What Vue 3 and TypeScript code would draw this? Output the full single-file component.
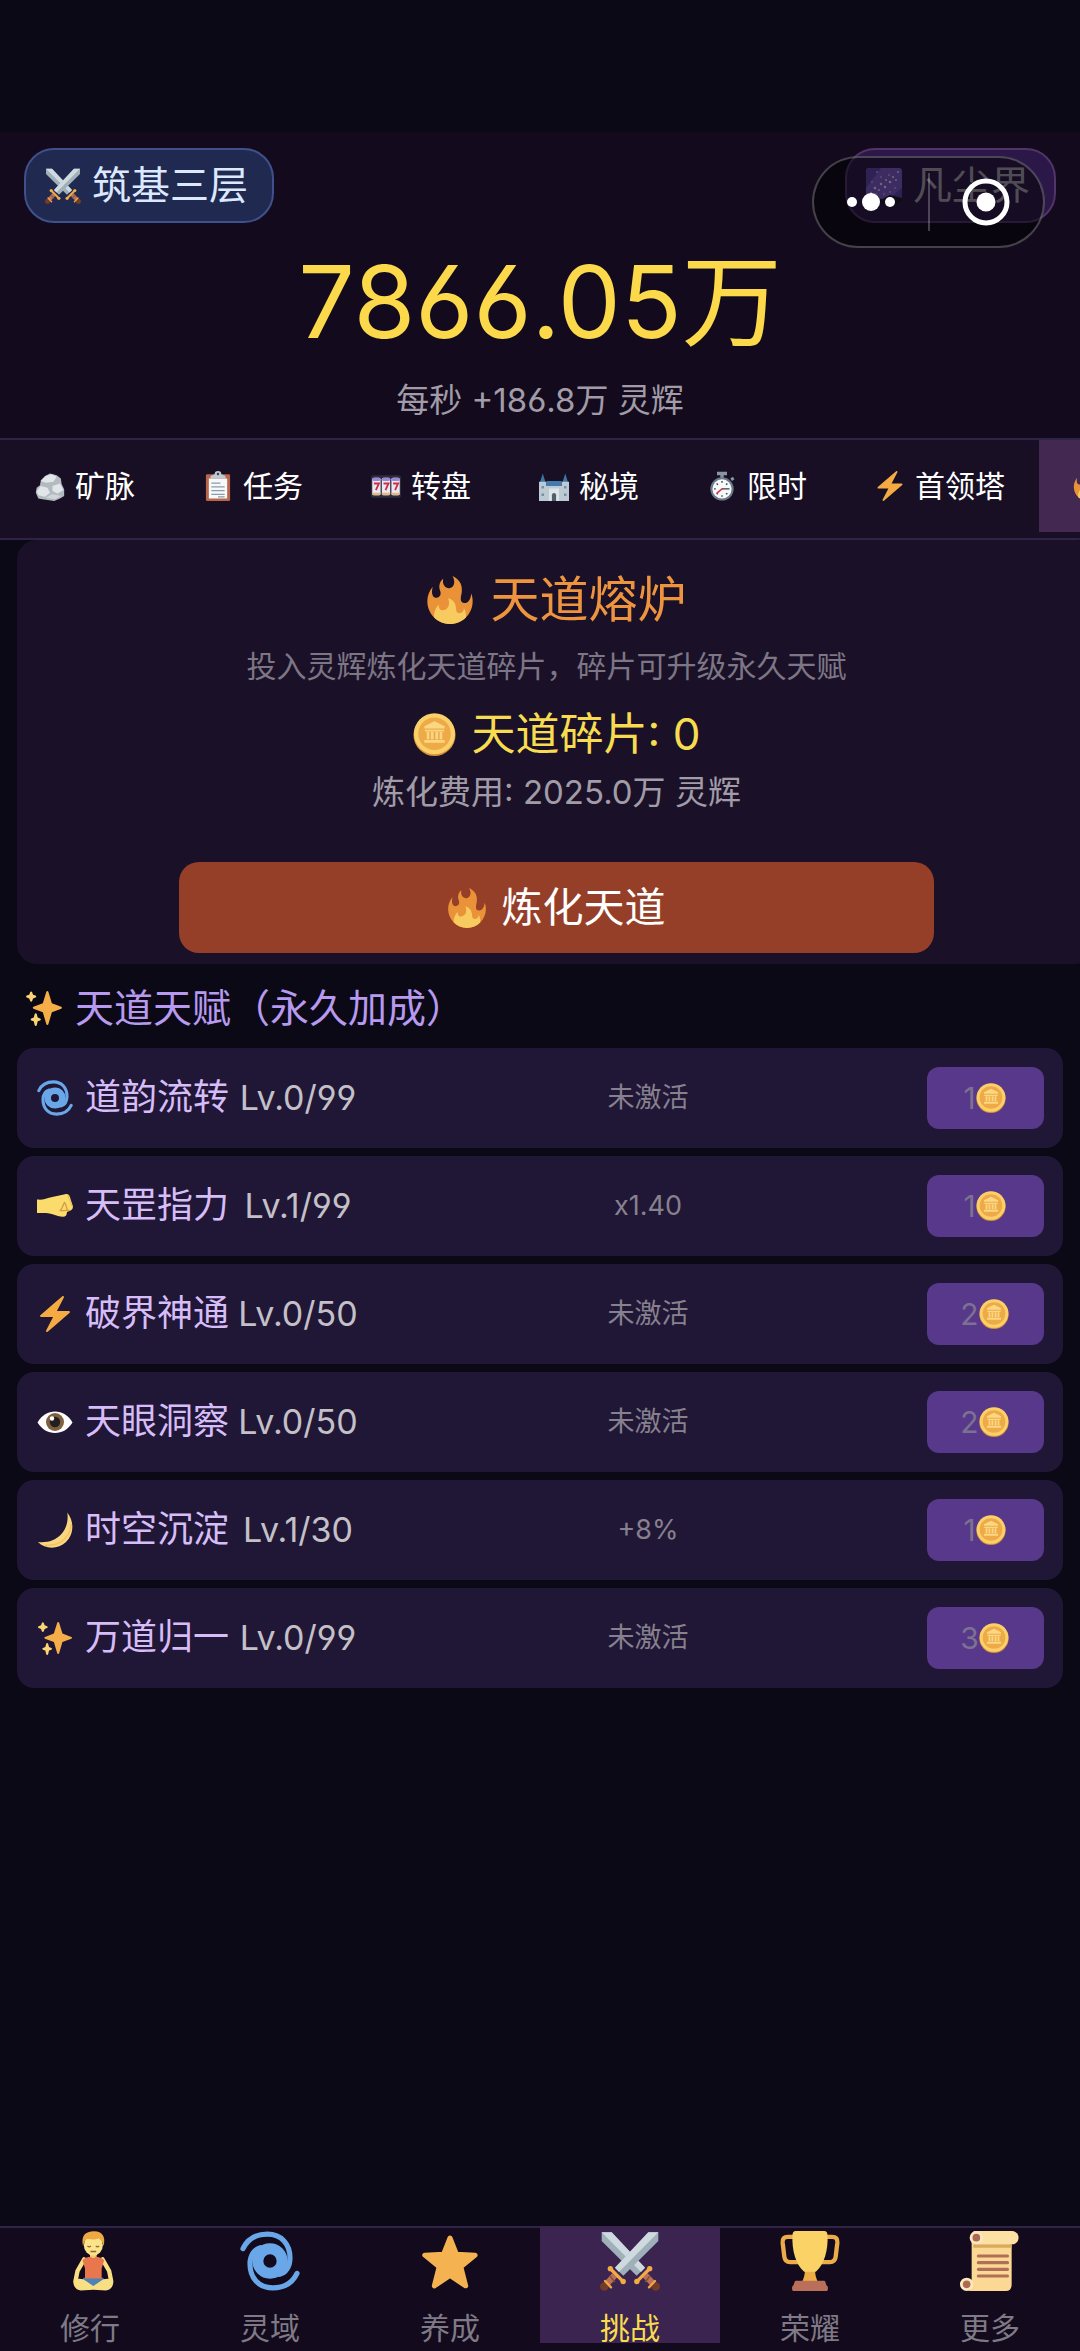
<script setup lang="ts">
interface Tab { icon: string; label: string }
interface Talent { icon: string; name: string; level: string; effect: string; cost: number }

const tabs: Tab[] = [
  { icon: 'rock', label: '矿脉' },
  { icon: 'clipboard', label: '任务' },
  { icon: 'slots', label: '转盘' },
  { icon: 'castle', label: '秘境' },
  { icon: 'watch', label: '限时' },
  { icon: 'bolt', label: '首领塔' },
]

const talents: Talent[] = [
  { icon: 'cyclone', name: '道韵流转', level: 'Lv.0/99', effect: '未激活', cost: 1 },
  { icon: 'fist', name: '天罡指力', level: 'Lv.1/99', effect: 'x1.40', cost: 1 },
  { icon: 'bolt', name: '破界神通', level: 'Lv.0/50', effect: '未激活', cost: 2 },
  { icon: 'eye', name: '天眼洞察', level: 'Lv.0/50', effect: '未激活', cost: 2 },
  { icon: 'moon', name: '时空沉淀', level: 'Lv.1/30', effect: '+8%', cost: 1 },
  { icon: 'sparkles', name: '万道归一', level: 'Lv.0/99', effect: '未激活', cost: 3 },
]

const navItems: Tab[] = [
  { icon: 'lotus', label: '修行' },
  { icon: 'cyclone', label: '灵域' },
  { icon: 'star', label: '养成' },
  { icon: 'swords', label: '挑战' },
  { icon: 'trophy', label: '荣耀' },
  { icon: 'scroll', label: '更多' },
]
const activeNav = '挑战'
</script>

<template>
  <div class="page">
    <svg class="sprite" aria-hidden="true">
      <defs>
        <g id="sword-half">
          <path d="M29 .8h6V6L14 26.8 9 22z" fill="#9fb0b9" />
          <path d="M29 .8h6L11.4 24.6 9 22z" fill="#cfdae0" />
          <path d="M8.8 26.600 4.200 31.600" stroke="#bb7158" stroke-width="3.8" />
          <path d="m6.2 27.200 2.600 3.400" stroke="#8f4d38" stroke-width="1" />
          <circle cx="2.600" cy="33.300" r="2.600" fill="#743a2a" />
          <path d="m3 30 3.600 3.800" stroke="#f0a640" stroke-width="1.4" stroke-linecap="round" />
          <path d="m6.400 22.800 7.400 7.400" stroke="#f3ac45" stroke-width="2" />
          <circle cx="6.200" cy="22.600" r="1.6" fill="#f3ac45" />
          <circle cx="13.900" cy="30.300" r="1.6" fill="#f3ac45" />
        </g>
        <path id="cyclone-arm" d="M1.8 10.6C5 3.8 11 1.9 16.4 1.9 25 1.9 30 8 30 16.2c0 5.2-2.6 8.8-6.2 9.8" fill="none" stroke="#69a7e8" stroke-width="3.1" stroke-linecap="round" />
      </defs>
      <symbol id="i-swords" viewBox="0 0 36 36">
        <use href="#sword-half" transform="matrix(-1 0 0 1 36 0)" />
        <use href="#sword-half" />
      </symbol>
      <symbol id="i-galaxy" viewBox="0 0 36 36">
        <rect width="36" height="36" rx="3" fill="#7a58c4" />
        <path d="M0 8V3a3 3 0 0 1 3-3h12L0 20zM36 20v13a3 3 0 0 1-3 3H16z" fill="#5d44a8" />
        <path d="M0 32l8-3 8 2 8-4 12 3v3a3 3 0 0 1-3 3H3a3 3 0 0 1-3-3z" fill="#20182e" />
        <g fill="#ded2fb">
          <circle cx="5" cy="25" r="1.2" /><circle cx="9" cy="20" r="1.3" /><circle cx="13" cy="22" r="1" />
          <circle cx="15" cy="16" r="1.2" /><circle cx="19" cy="19" r="1.3" /><circle cx="20" cy="12" r="1" />
          <circle cx="24" cy="14" r="1.3" /><circle cx="27" cy="9" r="1.1" /><circle cx="30" cy="12" r=".9" />
          <circle cx="32" cy="4" r="1" /><circle cx="10" cy="26" r=".8" /><circle cx="23" cy="7" r=".8" />
        </g>
        <g fill="#b59af0">
          <circle cx="6" cy="14" r="1" /><circle cx="11" cy="4" r="1" /><circle cx="15" cy="9" r="1" />
          <circle cx="24" cy="24" r="1" /><circle cx="29" cy="20" r="1" /><circle cx="18" cy="26" r="1" />
        </g>
      </symbol>
      <symbol id="i-rock" viewBox="0 0 36 36">
        <path d="M1 26 2 20l4-3 1-6 5-5 6-3 8 2 5 4 1 7 3 6v8l-5 3-7 3-6-1-8-1-5-1z" fill="#b3bbc1" />
        <path d="M7 12l6-6 7-2 6 3-4 6-9 1zM2 24l5-6 8 2 3 6-6 5-8-2zM21 18l9-3 4 8-7 4-6-3z" fill="#e2e6e9" />
        <path d="M13 32l7-4 8 1 3 1-7 4z" fill="#cfd5d9" />
      </symbol>
      <symbol id="i-clipboard" viewBox="0 0 36 36">
        <rect x="3.5" y="4" width="29" height="32" rx="1.5" fill="#b9654c" />
        <path d="M7 9h22v24H7z" fill="#f6f8fa" />
        <path d="M9 9V6l5-2a4 4 0 0 1 8 0l5 2v3z" fill="#bfc9d0" />
        <circle cx="18" cy="3.6" r="1.5" fill="#3b4650" />
        <path d="M10 14.5h11M10 19h16M10 23.500h16M10 28h16M18 31h8" stroke="#8b9cab" stroke-width="1.5" />
      </symbol>
      <symbol id="i-slots" viewBox="0 0 36 36">
        <rect y="5" width="36" height="27" rx="3" fill="#2b2d3c" />
        <g v-for="n in 3" :key="n">
          <rect :x="n * 11.500 - 10" y="8" width="10" height="21" rx="2" fill="#e9e9f4" />
          <rect :x="n * 11.500 - 10" y="8" width="10" height="4" rx="2" fill="#9b86d6" />
          <rect :x="n * 11.500 - 10" y="26" width="10" height="3" rx="1" fill="#e3b988" />
          <path :d="`M${n * 11.5 - 8} 15h6l-3.600 8`" fill="none" stroke="#cf2f45" stroke-width="2.200" />
        </g>
      </symbol>
      <symbol id="i-castle" viewBox="0 0 36 36">
        <path d="M1 14 4.500 3 8 14zM28 14l3.500-11L35 14z" fill="#3e74a6" />
        <path d="M0 13h9v5h18v-5h9v23H0z" fill="#bccad4" />
        <path d="M9 12h18v6H9z" fill="#447aab" />
        <path d="M12 21h12v15H12z" fill="#dce4ea" />
        <path d="M15.500 36v-7a2.500 2.500 0 0 1 5 0v7z" fill="#515d68" />
        <path d="M3 18h3v3H3zM30 18h3v3h-3zM3 27h3v3H3zM30 27h3v3h-3z" fill="#7990a2" />
      </symbol>
      <symbol id="i-watch" viewBox="0 0 36 36">
        <path d="M12 1h12v4h-4v4h-4V5h-4zM28 9l3-2 2 3-3 2z" fill="#8796a2" />
        <circle cx="18" cy="21.500" r="14" fill="#6b7a87" />
        <circle cx="18" cy="21.500" r="11.500" fill="#f6f8fa" />
        <path d="M18 12v2M18 29v2M8.500 21.500h2M11.600 15l1.400 1.400M24.400 15 23 16.400M11.600 28l1.400-1.400M24.400 28 23 26.600M18 21.500h9" stroke="#333e48" stroke-width="1.600" />
        <path d="m18 21.500-6 5" stroke="#dc3545" stroke-width="1.800" stroke-linecap="round" />
      </symbol>
      <symbol id="i-bolt" viewBox="0 0 36 36">
        <path fill="#f5ab42" d="M32.938 15.651C32.792 15.260 32.418 15 32 15H19.925L26.890 1.458c.219-.426.106-.947-.271-1.243C26.437.071 26.218 0 26 0c-.233 0-.466.082-.653.243L18 6.588 3.347 19.243c-.316.273-.430.714-.284 1.105S3.582 21 4 21h12.075L9.110 34.542c-.219.426-.106.947.271 1.243.182.144.401.215.619.215.233 0 .466-.082.653-.243L18 29.412l14.653-12.655c.317-.273.430-.714.285-1.106z" />
      </symbol>
      <symbol id="i-fire" viewBox="0 0 36 36">
        <path fill="#ea9238" d="M35 19c0-2.062-.367-4.039-1.040-5.868-.460 5.389-3.333 8.157-6.335 6.868-2.812-1.208-.917-5.917-.777-8.164.236-3.809-.012-8.169-6.931-11.794 2.875 5.500.333 8.917-2.333 9.125-2.958.231-5.667-2.542-4.667-7.042-3.238 2.386-3.332 6.402-2.333 9 1.042 2.708-.042 4.958-2.583 5.208-2.840.280-4.418-3.041-2.963-8.333C2.520 10.965 1 14.805 1 19c0 9.389 7.611 17 17 17s17-7.611 17-17z" />
        <path fill="#f7cb60" d="M28.394 23.999c.148 3.084-2.561 4.293-4.019 3.709-2.106-.843-1.541-2.291-2.083-5.291s-2.625-5.083-5.708-6c2.250 6.333-1.247 8.667-3.080 9.084-1.872.426-3.753-.001-3.968-4.007C7.352 23.668 6 26.676 6 30c0 .368.023.730.055 1.090C9.125 34.124 13.342 36 18 36s8.875-1.876 11.945-4.910c.032-.360.055-.722.055-1.090 0-2.187-.584-4.236-1.606-6.001z" />
      </symbol>
      <symbol id="i-coin" viewBox="0 0 36 36">
        <circle cx="18" cy="18.400" r="17.600" fill="#d98f35" />
        <circle cx="18" cy="17.400" r="17.200" fill="#fad06a" />
        <circle cx="18" cy="17.400" r="13.600" fill="#eeaa46" />
        <path d="m18 7 8.500 4v2h-17v-2zM10 14h16v1.500H10zM11.500 16h2.200v6h-2.200zM15 16h2.200v6H15zM18.800 16H21v6h-2.200zM22.300 16h2.200v6h-2.200zM9.500 22.500h17V25h-17z" fill="#fbd783" />
      </symbol>
      <symbol id="i-sparkles" viewBox="0 0 36 36">
        <path fill="#f6ae48" d="M34.347 16.893l-8.899-3.294-3.323-10.891c-.128-.420-.517-.708-.956-.708-.439 0-.828.288-.956.708l-3.322 10.891-8.900 3.294c-.393.146-.653.519-.653.938 0 .418.260.793.653.938l8.895 3.293 3.324 11.223c.126.424.516.715.959.715.442 0 .833-.291.959-.716l3.324-11.223 8.896-3.293c.391-.144.652-.518.652-.937 0-.418-.261-.792-.653-.938z" />
        <path fill="#fbd574" d="M14.347 27.894l-2.314-.856-.900-3.300c-.118-.436-.513-.738-.964-.738-.451 0-.846.302-.965.737l-.900 3.300-2.313.856c-.393.146-.653.520-.653.938 0 .418.260.792.653.938l2.301.853.907 3.622c.112.444.511.756.970.756.459 0 .858-.312.970-.757l.907-3.622 2.301-.853c.393-.144.653-.518.653-.936 0-.418-.260-.792-.653-.938zM10.009 6.231l-2.364-.875-.876-2.365c-.145-.393-.519-.653-.938-.653-.418 0-.792.260-.938.653l-.875 2.365-2.365.875c-.393.146-.653.520-.653.938 0 .418.260.792.653.938l2.365.875.875 2.365c.146.393.520.653.938.653.418 0 .792-.260.938-.653l.875-2.365 2.365-.875c.393-.146.653-.520.653-.938 0-.418-.260-.792-.653-.938z" />
      </symbol>
      <symbol id="i-cyclone" viewBox="0 0 36 36">
        <circle cx="18" cy="18" r="7.300" fill="none" stroke="#69a7e8" stroke-width="6.600" />
        <use href="#cyclone-arm" />
        <use href="#cyclone-arm" transform="rotate(180 18 18)" />
      </symbol>
      <symbol id="i-fist" viewBox="0 0 36 36">
        <path d="M0 11.500c6 .500 8-.500 13-2l15-3.300c3-.600 4.200.800 5 3l2.600 8c.700 2.500.200 4.300-2 5.300L30 24c-.300 3.500-1.600 5-4.500 4.800-5-.400-9-2.400-13-3.300-4-.800-8-.500-12.500-.500z" fill="#fadb6c" />
        <path d="M23 22.500c2-1 3.200-6.500 4.500-8 1.400 1.200 2 4.500 2.500 6.500M24 22.800l8-.600" fill="none" stroke="#d79a3e" stroke-width="1.300" stroke-linecap="round" />
        <path d="M30.500 6.500 35 18" stroke="#eebb4e" stroke-width="1" />
      </symbol>
      <symbol id="i-eye" viewBox="0 0 36 36">
        <path d="M.5 18.500C5 11 11 7.500 18 7.500s13 3.500 17.500 11C31 25.500 25 29 18 29S5 25.500.500 18.500z" fill="#fff" />
        <circle cx="18" cy="18" r="9" fill="#80603f" />
        <circle cx="18" cy="18" r="5.200" fill="#211f22" />
        <circle cx="15" cy="14.500" r="2.200" fill="#fff" />
      </symbol>
      <symbol id="i-moon" viewBox="0 0 36 36">
        <path d="M30.300.500C37.500 9.500 37 22.500 29 30 21 37.500 8.500 37.500.800 30c9.500 1 17.500-1.500 23.200-7.500C29 17 31.600 9.500 30.300.500z" fill="#fad681" />
        <path d="M8 33c9 1.200 15.500-1.500 20.500-7 4-4.400 5.500-9.500 5.500-14" fill="none" stroke="#f4c25e" stroke-width="1.400" />
      </symbol>
      <symbol id="i-lotus" viewBox="-2 0 36 36">
        <path d="M12.500 17 8.500 24 7.300 30M23.500 17l4 7 1.200 6" fill="none" stroke="#f9df83" stroke-width="2.600" stroke-linecap="round" />
        <path d="M12 28h12l1 5-7 2-7-2z" fill="#4b83b8" />
        <path d="M6 30.500c0-1.500 3-2.500 6-1.500l6 4 6-4c3-1 6 0 6 1.500 0 3-2 5-4.500 5.200L18 35.200l-7.500.500C8 35.500 6 33.500 6 30.500z" fill="#f9df83" />
        <path d="m12.500 28.500 5.500 4 5.500-4z" fill="#4b83b8" />
        <path d="M16 12h4v5h-4z" fill="#f0cb6a" />
        <path d="M11.500 17.500c1.500-1.600 3.500-2 5-2 .600 1 2.400 1 3 0 1.500 0 3.500.400 5 2l-1.500 5v6H13v-6z" fill="#e8774d" />
        <ellipse cx="18" cy="8.500" rx="5.700" ry="6.300" fill="#fbe38a" />
        <path d="M11.800 9C10.500 3 13 .200 18.500.200 23.500.200 25.500 3.500 24.200 9c-.700-2.500-1.500-4-3-4.500-2.700 1-5.500.500-7.200.200C12.800 5.500 12.500 7 11.800 9z" fill="#efa843" />
        <path d="M14.500 9q1 1 2 0M19.500 9q1 1 2 0M16.300 12.300h3.400" fill="none" stroke="#8e6734" stroke-width=".8" />
      </symbol>
      <symbol id="i-star" viewBox="0 0 36 36">
        <path d="m18 4.200 3.900 9.800 11.200.500-8.600 7 2.900 11.400L18 26.600l-9.400 6.300 2.900-11.400-8.600-7L14.100 14z" fill="#f5b250" stroke="#f5b250" stroke-width="3" stroke-linejoin="round" />
      </symbol>
      <symbol id="i-trophy" viewBox="0 0 36 36">
        <path d="M8 3.500H4.600C2.500 3.500 1.400 4.600 1.600 7l1 8.500c.300 2.200 1.300 3.200 3.400 3.200h7M28 3.500h3.400c2.100 0 3.200 1.100 3 3.500l-1 8.500c-.300 2.200-1.300 3.200-3.400 3.200h-7" fill="none" stroke="#eeab49" stroke-width="2.600" />
        <path d="M15 22h6c0 4 .500 6 2 9H13c1.500-3 2-5 2-9z" fill="#efad45" />
        <path d="M9.500 0h17c1.500 0 2 1 2 2.500.5 9-2 17.500-7 22h-7C9.500 20 7 11.500 7.500 2.500 7.500 1 8 0 9.500 0z" fill="#fbd265" />
        <path d="M9.500 29.800h17c1 0 1 2.700 1.700 3 .8.200.8 3.200-.2 3.200H8c-1 0-1-3-.200-3.200.700-.300.700-3 1.700-3z" fill="#b96f5a" />
      </symbol>
      <symbol id="i-scroll" viewBox="0 0 36 36">
        <path d="M9 0h20.500v8H31v24c0 2.500-1 4-3.500 4H4c3 0 3-3 3-6V4c0-2 .500-4 2-4z" fill="#fbd994" />
        <path d="M8 8h23v2H8z" fill="#dba95b" />
        <path d="M9.500 0H31c5.500 0 5.500 8 0 8H9.500z" fill="#fde1a4" />
        <circle cx="9.800" cy="4" r="4" fill="#fde8bd" /><circle cx="9.800" cy="4" r="2.300" fill="#ab6a56" />
        <circle cx="4" cy="32" r="4" fill="#fde8bd" /><circle cx="4" cy="32" r="2.300" fill="#ab6a56" />
        <path d="M11 15h17.500M11 19h17.500M11 23h17.500M11 27h17.500" stroke="#b06f59" stroke-width="1.900" stroke-linecap="round" />
      </symbol>
    </svg>

    <header class="header">
      <div class="badges">
        <div class="badge rank"><svg class="icon s36"><use href="#i-swords" /></svg>筑基三层</div>
        <div class="badge realm"><svg class="icon s36"><use href="#i-galaxy" /></svg>凡尘界</div>
        <div class="capsule">
          <button class="capsule-btn" aria-label="更多">
            <svg width="50" height="20" viewBox="0 0 50 20" fill="#fff"><circle cx="6" cy="10" r="5" /><circle cx="25" cy="10" r="9" /><circle cx="44" cy="10" r="5" /></svg>
          </button>
          <span class="divider"></span>
          <button class="capsule-btn" aria-label="关闭">
            <svg width="48" height="48" viewBox="0 0 48 48"><circle cx="24" cy="24" r="21" fill="none" stroke="#fff" stroke-width="5" /><circle cx="24" cy="24" r="9.500" fill="#fff" /></svg>
          </button>
        </div>
      </div>
      <div class="amount">7866.05万</div>
      <div class="rate">每秒 +186.8万 灵辉</div>
    </header>

    <nav class="tabs">
      <button v-for="t in tabs" :key="t.label" class="tab">
        <svg class="icon s30"><use :href="`#i-${t.icon}`" /></svg>{{ t.label }}
      </button>
      <button class="tab active" aria-label="天道熔炉">
        <svg class="icon s30"><use href="#i-fire" /></svg>
      </button>
    </nav>

    <main class="main">
      <section class="furnace">
        <h1 class="title"><svg class="icon s48"><use href="#i-fire" /></svg>天道熔炉</h1>
        <p class="desc">投入灵辉炼化天道碎片，碎片可升级永久天赋</p>
        <p class="shards"><svg class="icon s43"><use href="#i-coin" /></svg>天道碎片: 0</p>
        <p class="cost">炼化费用: 2025.0万 灵辉</p>
        <button class="refine"><svg class="icon s40"><use href="#i-fire" /></svg>炼化天道</button>
      </section>

      <h2 class="subtitle"><svg class="icon s38"><use href="#i-sparkles" /></svg>天道天赋（永久加成）</h2>
      <ul class="talents">
        <li v-for="t in talents" :key="t.name" class="talent">
          <svg class="icon s36"><use :href="`#i-${t.icon}`" /></svg>
          <span class="name">{{ t.name }}</span>
          <span class="level">{{ t.level }}</span>
          <span class="effect">{{ t.effect }}</span>
          <button class="buy">{{ t.cost }}<svg class="icon s30"><use href="#i-coin" /></svg></button>
        </li>
      </ul>
    </main>

    <nav class="bottom">
      <button v-for="n in navItems" :key="n.label" class="nav-item" :class="{ active: n.label === activeNav }">
        <svg class="icon s60"><use :href="`#i-${n.icon}`" /></svg>
        <span>{{ n.label }}</span>
      </button>
    </nav>
  </div>
</template>

<style>
body {
  background: #0c0916;
}
</style>

<style scoped>
.page {
  display: flex;
  flex-direction: column;
  box-sizing: border-box;
  min-height: 100vh;
  padding-top: 132px;
  overflow: hidden;
  background: #0c0916;
  font-family: Inter, "Noto Sans CJK SC", sans-serif;
  font-feature-settings: "cv03", "cv04";
  line-height: 1.2;
}
.page * {
  box-sizing: border-box;
}
.sprite {
  position: absolute;
  width: 0;
  height: 0;
}
button {
  margin: 0;
  padding: 0;
  border: 0;
  background: none;
  color: inherit;
  font: inherit;
  font-feature-settings: inherit;
}
h1, h2, p, ul {
  margin: 0;
  padding: 0;
  font-weight: 400;
  list-style: none;
}
.icon { flex: none; display: block; }
.s30 { width: 30px; height: 30px; }
.s36 { width: 36px; height: 36px; }
.s38 { width: 38px; height: 38px; }
.s40 { width: 40px; height: 40px; }
.s43 { width: 43px; height: 43px; }
.s48 { width: 48px; height: 48px; }
.s60 { width: 60px; height: 60px; }

.header {
  padding: 16px 24px 0;
  background: #130b1d;
}
.badges {
  position: relative;
  display: flex;
  justify-content: space-between;
}
.badge {
  display: flex;
  align-items: center;
  gap: 11px;
  height: 75px;
  padding: 0 24px 0 19px;
  border: 2px solid;
  border-radius: 30px;
  font-size: 39px;
}
.rank {
  background: #20294f;
  border-color: #40508a;
  color: #dce8ff;
}
.realm {
  background: #2c1848;
  border-color: #513468;
  color: #a098a8;
}
.capsule {
  position: absolute;
  top: 8px;
  right: 11px;
  display: flex;
  align-items: center;
  width: 233px;
  height: 92px;
  border: 2px solid rgba(255, 255, 255, 0.24);
  border-radius: 46px;
  background: rgba(0, 0, 0, 0.5);
}
.capsule-btn {
  display: flex;
  flex: 1;
  align-items: center;
  justify-content: center;
}
.divider {
  width: 2px;
  height: 58px;
  background: rgba(255, 255, 255, 0.24);
}
.amount {
  margin-top: 19px;
  color: #fbd94b;
  font-size: 100px;
  line-height: 120px;
  text-align: center;
}
.rate {
  padding: 18px 0;
  color: #a19ca7;
  font-size: 33px;
  line-height: 40px;
  text-align: center;
}

.tabs {
  display: flex;
  height: 102px;
  padding: 0 0 6px 1px;
  overflow: hidden;
  border-top: 2px solid #30234a;
  border-bottom: 2px solid #30234a;
  background: #180f24;
}
.tab {
  display: flex;
  flex: none;
  align-items: center;
  gap: 10px;
  padding: 0 34px;
  color: #fff;
  font-size: 30px;
  white-space: nowrap;
}
.tab.active {
  background: #432852;
}

.main {
  flex: 1;
  padding: 0 17px;
  overflow: hidden;
}
.furnace {
  display: flex;
  flex-direction: column;
  align-items: center;
  margin-right: -33px;
  padding: 24px 0 11px;
  border-radius: 20px;
  background: #1a1128;
}
.title,
.shards,
.refine,
.subtitle {
  display: flex;
  align-items: center;
}
.title {
  gap: 16px;
  height: 72px;
  color: #ee943e;
  font-size: 49px;
}
.desc {
  height: 60px;
  padding-right: 20px;
  color: #7d7685;
  font-size: 30px;
  line-height: 60px;
}
.shards {
  gap: 16px;
  height: 76px;
  color: #f7dc50;
  font-size: 44px;
}
.cost {
  color: #a19ca7;
  font-size: 33px;
  line-height: 40px;
}
.refine {
  justify-content: center;
  gap: 14px;
  width: 70%;
  height: 91px;
  margin-top: 50px;
  border-radius: 20px;
  background: #963f28;
  color: #fff;
  font-size: 41px;
}
.subtitle {
  gap: 12px;
  height: 84px;
  padding: 4px 8px 0;
  color: #b79af0;
  font-size: 39px;
}
.talents {
  display: flex;
  flex-direction: column;
  gap: 8px;
}
.talent {
  display: flex;
  align-items: center;
  height: 100px;
  padding: 0 19px 0 20px;
  border-radius: 17px;
  background: #201636;
}
.name {
  width: 148px;
  margin-left: 12px;
  color: #d6bdf8;
  font-size: 36px;
  white-space: nowrap;
}
.level {
  width: 130px;
  color: #c4c0c8;
  font-size: 34px;
  text-align: center;
  white-space: nowrap;
}
.effect {
  flex: 1;
  padding-left: 6px;
  color: #87818e;
  font-size: 27px;
  text-align: center;
}
.buy {
  display: flex;
  align-items: center;
  justify-content: center;
  width: 117px;
  height: 62px;
  padding-right: 2px;
  border-radius: 12px;
  background: #57388a;
  color: #7c7191;
  font-size: 30px;
}

.bottom {
  display: flex;
  height: 125px;
  padding-bottom: 8px;
  background: #130b1d;
  box-shadow: inset 0 2px #30234a;
}
.nav-item {
  display: flex;
  flex: 1;
  flex-direction: column;
  align-items: center;
  gap: 17px;
  padding-top: 5px;
  color: #7f7a85;
  font-size: 30px;
  line-height: 40px;
}
.nav-item.active {
  background: #3b2450;
  color: #f7dc50;
}
</style>
